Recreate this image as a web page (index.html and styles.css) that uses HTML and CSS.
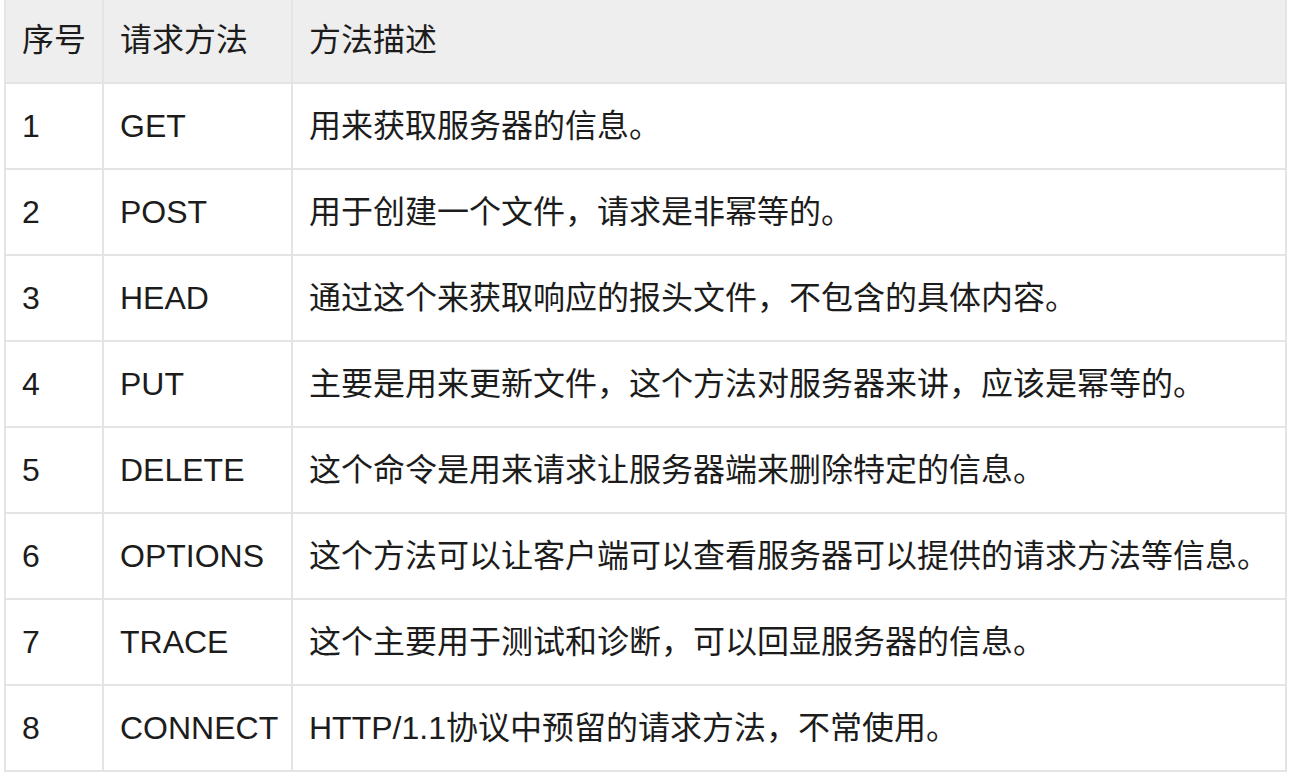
FILE: index.html
```html
<!DOCTYPE html>
<html lang="zh-CN">
<head>
<meta charset="utf-8">
<title>HTTP 请求方法</title>
<link rel="stylesheet" href="styles.css">
</head>
<body>
<table class="methods">
  <colgroup>
    <col class="col-no">
    <col class="col-method">
    <col class="col-desc">
  </colgroup>
  <thead>
    <tr><th>序号</th><th>请求方法</th><th>方法描述</th></tr>
  </thead>
  <tbody>
    <tr><td>1</td><td>GET</td><td>用来获取服务器的信息。</td></tr>
    <tr><td>2</td><td>POST</td><td>用于创建一个文件，请求是非幂等的。</td></tr>
    <tr><td>3</td><td>HEAD</td><td>通过这个来获取响应的报头文件，不包含的具体内容。</td></tr>
    <tr><td>4</td><td>PUT</td><td>主要是用来更新文件，这个方法对服务器来讲，应该是幂等的。</td></tr>
    <tr><td>5</td><td>DELETE</td><td>这个命令是用来请求让服务器端来删除特定的信息。</td></tr>
    <tr><td>6</td><td>OPTIONS</td><td>这个方法可以让客户端可以查看服务器可以提供的请求方法等信息。</td></tr>
    <tr><td>7</td><td>TRACE</td><td>这个主要用于测试和诊断，可以回显服务器的信息。</td></tr>
    <tr><td>8</td><td>CONNECT</td><td>HTTP/1.1协议中预留的请求方法，不常使用。</td></tr>
  </tbody>
</table>
</body>
</html>
```
FILE: styles.css
```css
html, body {
  margin: 0;
  padding: 0;
  background: #ffffff;
}

body {
  font-family: "Liberation Sans", "Noto Sans CJK SC", sans-serif;
  color: #1c1c1c;
  overflow: hidden;
}

.methods {
  border-collapse: collapse;
  table-layout: fixed;
  width: 1283px;
  margin: -4px 0 0 4px;
  font-size: 32px;
}

.col-no { width: 98px; }
.col-method { width: 189px; }
.col-desc { width: 994px; }

.methods th,
.methods td {
  border: 2px solid #e4e4e4;
  height: 86px;
  padding: 0 0 0 16px;
  box-sizing: border-box;
  text-align: left;
  vertical-align: middle;
  white-space: nowrap;
  font-weight: normal;
  line-height: 40px;
}

.methods thead th {
  background: #eeeeee;
}
```
